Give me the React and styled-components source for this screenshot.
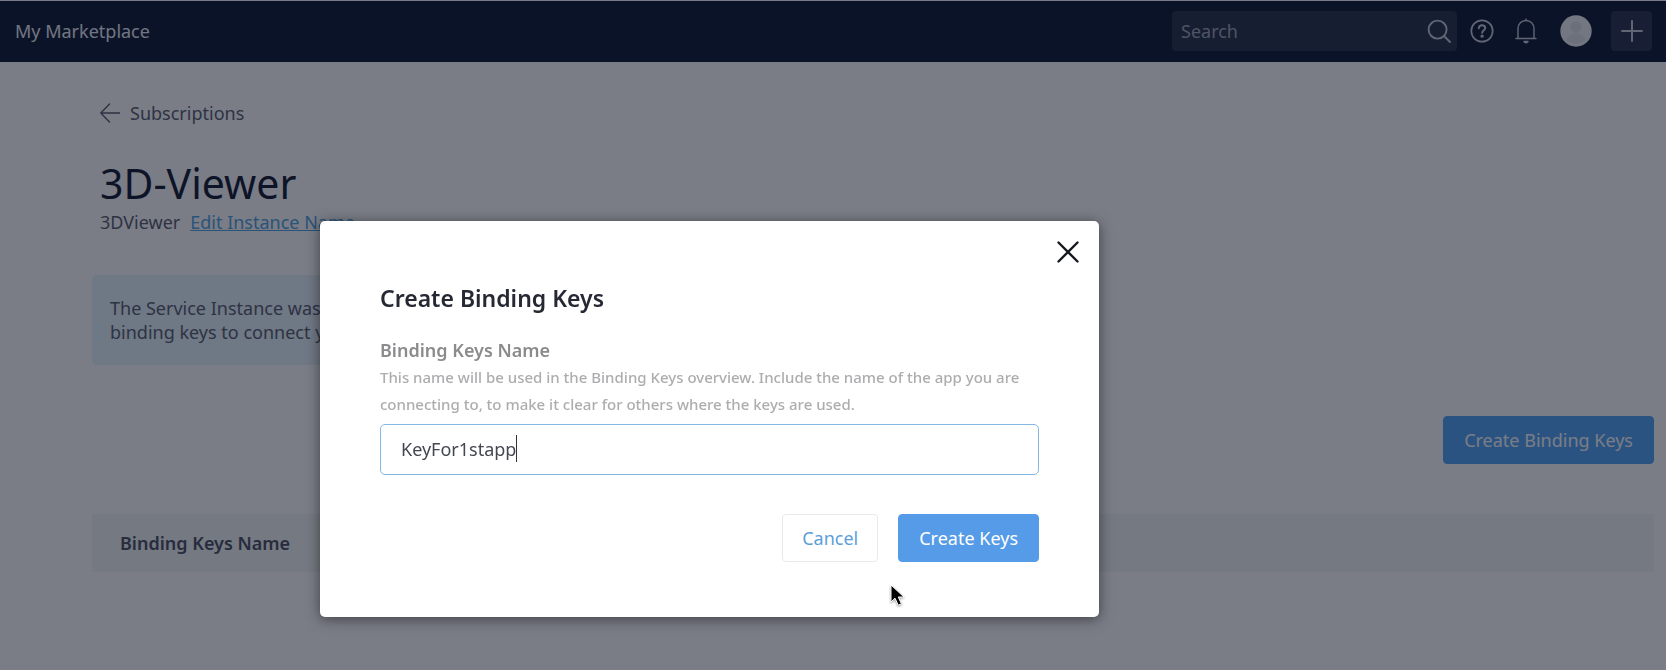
import React, { useState } from "react";
import styled, { createGlobalStyle } from "styled-components";

const GlobalStyle = createGlobalStyle`
  *, *::before, *::after { box-sizing: border-box; }
  html, body { margin: 0; min-height: 100%; background: #fff; }
  body, button, input {
    font-family: "Noto Sans", "Open Sans", sans-serif;
    font-size: 18px;
    line-height: 24px;
  }
`;

const Page = styled.div`
  min-height: 100vh;
  color: #5a5e6e;
  overflow: hidden;
`;

const TopBar = styled.header`
  display: flex;
  align-items: center;
  justify-content: space-between;
  height: 62px;
  padding: 0 14px 2px 15px;
  border-top: 1px solid #fff;
  background: #0f1933;
`;

const Brand = styled.span`
  color: #eceef4;
`;

const Tools = styled.div`
  display: flex;
  align-items: center;
`;

const SearchBox = styled.label`
  display: flex;
  align-items: center;
  width: 285px;
  height: 40px;
  margin-right: 13px;
  padding: 0 6px 0 9px;
  border-radius: 4px;
  background: #273049;
`;

const SearchInput = styled.input`
  flex: 1;
  min-width: 0;
  padding: 0;
  border: 0;
  outline: 0;
  background: transparent;
  color: #fff;
  &::placeholder { color: #a0a5b4; opacity: 1; }
`;

const IconButton = styled.button`
  display: flex;
  padding: 0;
  border: 0;
  background: transparent;
  color: #c9cdd9;
  margin-right: ${(p) => p.$gap}px;
`;

const AddButton = styled(IconButton)`
  align-items: center;
  justify-content: center;
  width: 41px;
  height: 40px;
  border-radius: 4px;
  background: #2b344d;
`;

const Content = styled.main`
  display: flex;
  flex-direction: column;
  padding: 39px 12px 0 92px;
`;

const Heading = styled.div`
  padding-left: 8px;
`;

const BackLink = styled.a`
  display: inline-flex;
  align-items: center;
  gap: 10px;
  color: inherit;
  text-decoration: none;
`;

const Title = styled.h1`
  margin: 29px 0 0;
  font-size: 41px;
  line-height: 52px;
  font-weight: 400;
  color: #141b32;
`;

const Subline = styled.div`
  display: flex;
  gap: 10px;
  margin-top: 1px;
`;

const EditLink = styled.a`
  color: #4fa3e0;
  text-decoration: underline;
`;

const Notice = styled.p`
  width: 60%;
  margin: 41px 0 0;
  padding: 21px 18px;
  border-radius: 4px;
  background: #e8f3fc;
`;

const Actions = styled.div`
  display: flex;
  justify-content: flex-end;
  gap: ${(p) => p.$gap || 0}px;
  margin-top: ${(p) => p.$top}px;
`;

const Button = styled.button`
  height: 48px;
  padding: 0 ${(p) => (p.$plain ? 19 : 20)}px;
  border: 1px solid ${(p) => (p.$plain ? "#ece8ea" : p.$color)};
  border-radius: 4px;
  background: ${(p) => (p.$plain ? "#fff" : p.$color)};
  color: ${(p) => (p.$plain ? p.$color : "#fff")};
`;

const Table = styled.table`
  width: 100%;
  margin-top: 50px;
  border-collapse: collapse;
  background: #f4f6f3;
`;

const HeadCell = styled.th`
  height: 58px;
  padding: 0 28px;
  text-align: left;
  font-weight: 600;
  color: #4a4f64;
`;

const Backdrop = styled.div`
  position: fixed;
  inset: 0;
  display: flex;
  justify-content: center;
  align-items: flex-start;
  padding: 221px 247px 0 0;
  background: rgba(9, 14, 31, 0.54);
`;

const Dialog = styled.section`
  position: relative;
  display: flex;
  flex-direction: column;
  width: 779px;
  max-width: 100%;
  padding: 20px 60px 55px;
  border-radius: 5px;
  background: #fff;
  box-shadow: 0 2px 14px rgba(0, 0, 0, 0.5);
`;

const CloseButton = styled.button`
  align-self: flex-end;
  display: flex;
  margin-right: -40px;
  padding: 0;
  border: 0;
  background: transparent;
  color: #15181f;
`;

const DialogTitle = styled.h2`
  margin: 19px 0 0;
  font-size: 23px;
  line-height: 32px;
  font-weight: 600;
  color: #262933;
`;

const FieldLabel = styled.label`
  margin-top: 24px;
  font-weight: 600;
  color: #8b8b8d;
`;

const Help = styled.p`
  margin: 2px 0 6px;
  font-size: 15px;
  font-weight: 500;
  line-height: 27px;
  color: #adadaf;
`;

const Field = styled.div`
  display: flex;
  align-items: center;
  height: 51px;
  padding: 0 20px 2px;
  border: 1px solid #84b7e2;
  border-radius: 5px;
`;

const FieldInput = styled.input`
  field-sizing: content;
  max-width: 100%;
  padding: 0;
  border: 0;
  outline: 0;
  background: transparent;
  color: #45474f;
`;

const Caret = styled.span`
  width: 1px;
  height: 27px;
  background: #30333c;
`;

const Pointer = styled.svg`
  position: absolute;
  left: 569px;
  top: 362px;
`;

const stroke = { fill: "none", stroke: "currentColor", strokeLinecap: "round", strokeLinejoin: "round" };

const SearchIcon = () => (
  <svg width="24" height="24" viewBox="0 0 24 24" {...stroke} strokeWidth="1.9" aria-hidden="true" color="#c9cdd9">
    <circle cx="10.6" cy="10.6" r="9" />
    <path d="M17 17l6 6" />
  </svg>
);

const HelpIcon = () => (
  <svg width="24" height="24" viewBox="0 0 24 24" {...stroke} strokeWidth="1.7" aria-hidden="true">
    <circle cx="12" cy="12" r="10.7" />
    <path d="M8.8 9.2c.2-1.9 1.5-2.9 3.2-2.9 1.9 0 3.2 1.1 3.2 2.7 0 2.2-3 2.3-3 4.800" strokeWidth="2" />
    <circle cx="12.1" cy="17.2" r=".8" fill="currentColor" />
  </svg>
);

const BellIcon = () => (
  <svg width="22" height="26" viewBox="0 0 22 26" {...stroke} strokeWidth="1.4" aria-hidden="true">
    <path d="M1 20.5h20M3 20.5V10.5a8 8 0 0 1 16 0v10M11 2.5V1" />
    <path d="M9 23.500q2 2.500 4 0z" fill="currentColor" />
  </svg>
);

const Avatar = () => (
  <svg width="32" height="32" viewBox="0 0 32 32" aria-hidden="true">
    <circle cx="16" cy="16" r="15.7" fill="#f0f1f3" />
    <circle cx="16" cy="12" r="5.5" fill="#e0e2e5" />
    <path d="M6.5 25c1-9 18-9 19 0-5 5-14 5-19 0z" fill="#e3e5e8" />
  </svg>
);

const PlusIcon = () => (
  <svg width="22" height="22" viewBox="0 0 22 22" {...stroke} strokeWidth="2" aria-hidden="true">
    <path d="M11 1v20M1 11h20" />
  </svg>
);

const BackIcon = () => (
  <svg width="20" height="20" viewBox="0 0 20 20" {...stroke} strokeWidth="1.4" aria-hidden="true">
    <path d="M20 10H.8M9.500 1L.8 10l8.700 9" />
  </svg>
);

const CloseIcon = () => (
  <svg width="22" height="22" viewBox="0 0 22 22" {...stroke} strokeWidth="2.4" aria-hidden="true">
    <path d="M1.500 1.500l19 19M20.500 1.500l-19 19" />
  </svg>
);

export default function App() {
  const [name, setName] = useState("KeyFor1stapp");
  return (
    <>
      <GlobalStyle />
      <Page>
        <TopBar>
          <Brand>My Marketplace</Brand>
          <Tools>
            <SearchBox>
              <SearchInput type="search" placeholder="Search" aria-label="Search" />
              <SearchIcon />
            </SearchBox>
            <IconButton $gap={21} aria-label="Help"><HelpIcon /></IconButton>
            <IconButton $gap={23} aria-label="Notifications"><BellIcon /></IconButton>
            <IconButton $gap={19} aria-label="Account"><Avatar /></IconButton>
            <AddButton $gap={0} aria-label="Add"><PlusIcon /></AddButton>
          </Tools>
        </TopBar>
        <Content>
          <Heading>
            <BackLink href="#subscriptions"><BackIcon />Subscriptions</BackLink>
            <Title>3D-Viewer</Title>
            <Subline>
              <span>3DViewer</span>
              <EditLink href="#edit">Edit Instance Name</EditLink>
            </Subline>
          </Heading>
          <Notice>
            The Service Instance was
            <br />
            binding keys to connect your
          </Notice>
          <Actions $top={51}>
            <Button $color="#51a4f6">Create Binding Keys</Button>
          </Actions>
          <Table>
            <thead>
              <tr><HeadCell scope="col">Binding Keys Name</HeadCell></tr>
            </thead>
          </Table>
        </Content>
      </Page>
      <Backdrop>
        <Dialog role="dialog" aria-modal="true" aria-labelledby="dialog-title">
          <CloseButton aria-label="Close"><CloseIcon /></CloseButton>
          <DialogTitle id="dialog-title">Create Binding Keys</DialogTitle>
          <FieldLabel htmlFor="key-name">Binding Keys Name</FieldLabel>
          <Help id="key-help">
            This name will be used in the Binding Keys overview. Include the name of the app you are
            connecting to, to make it clear for others where the keys are used.
          </Help>
          <Field>
            <FieldInput
              id="key-name"
              type="text"
              aria-describedby="key-help"
              value={name}
              onChange={(e) => setName(e.target.value)}
            />
            <Caret />
          </Field>
          <Actions $top={39} $gap={20}>
            <Button $plain $color="#5b9fd8">Cancel</Button>
            <Button $color="#559be7">Create Keys</Button>
          </Actions>
          <Pointer width="18" height="26" viewBox="0 0 18 26" aria-hidden="true">
            <path
              d="M2 2v17l4-3.800 3.200 7 3.200-1.400-3.100-6.800H15z"
              fill="#000"
              stroke="#fff"
              strokeWidth="1"
              filter="drop-shadow(0 1px 1px rgba(0,0,0,.4))"
            />
          </Pointer>
        </Dialog>
      </Backdrop>
    </>
  );
}
